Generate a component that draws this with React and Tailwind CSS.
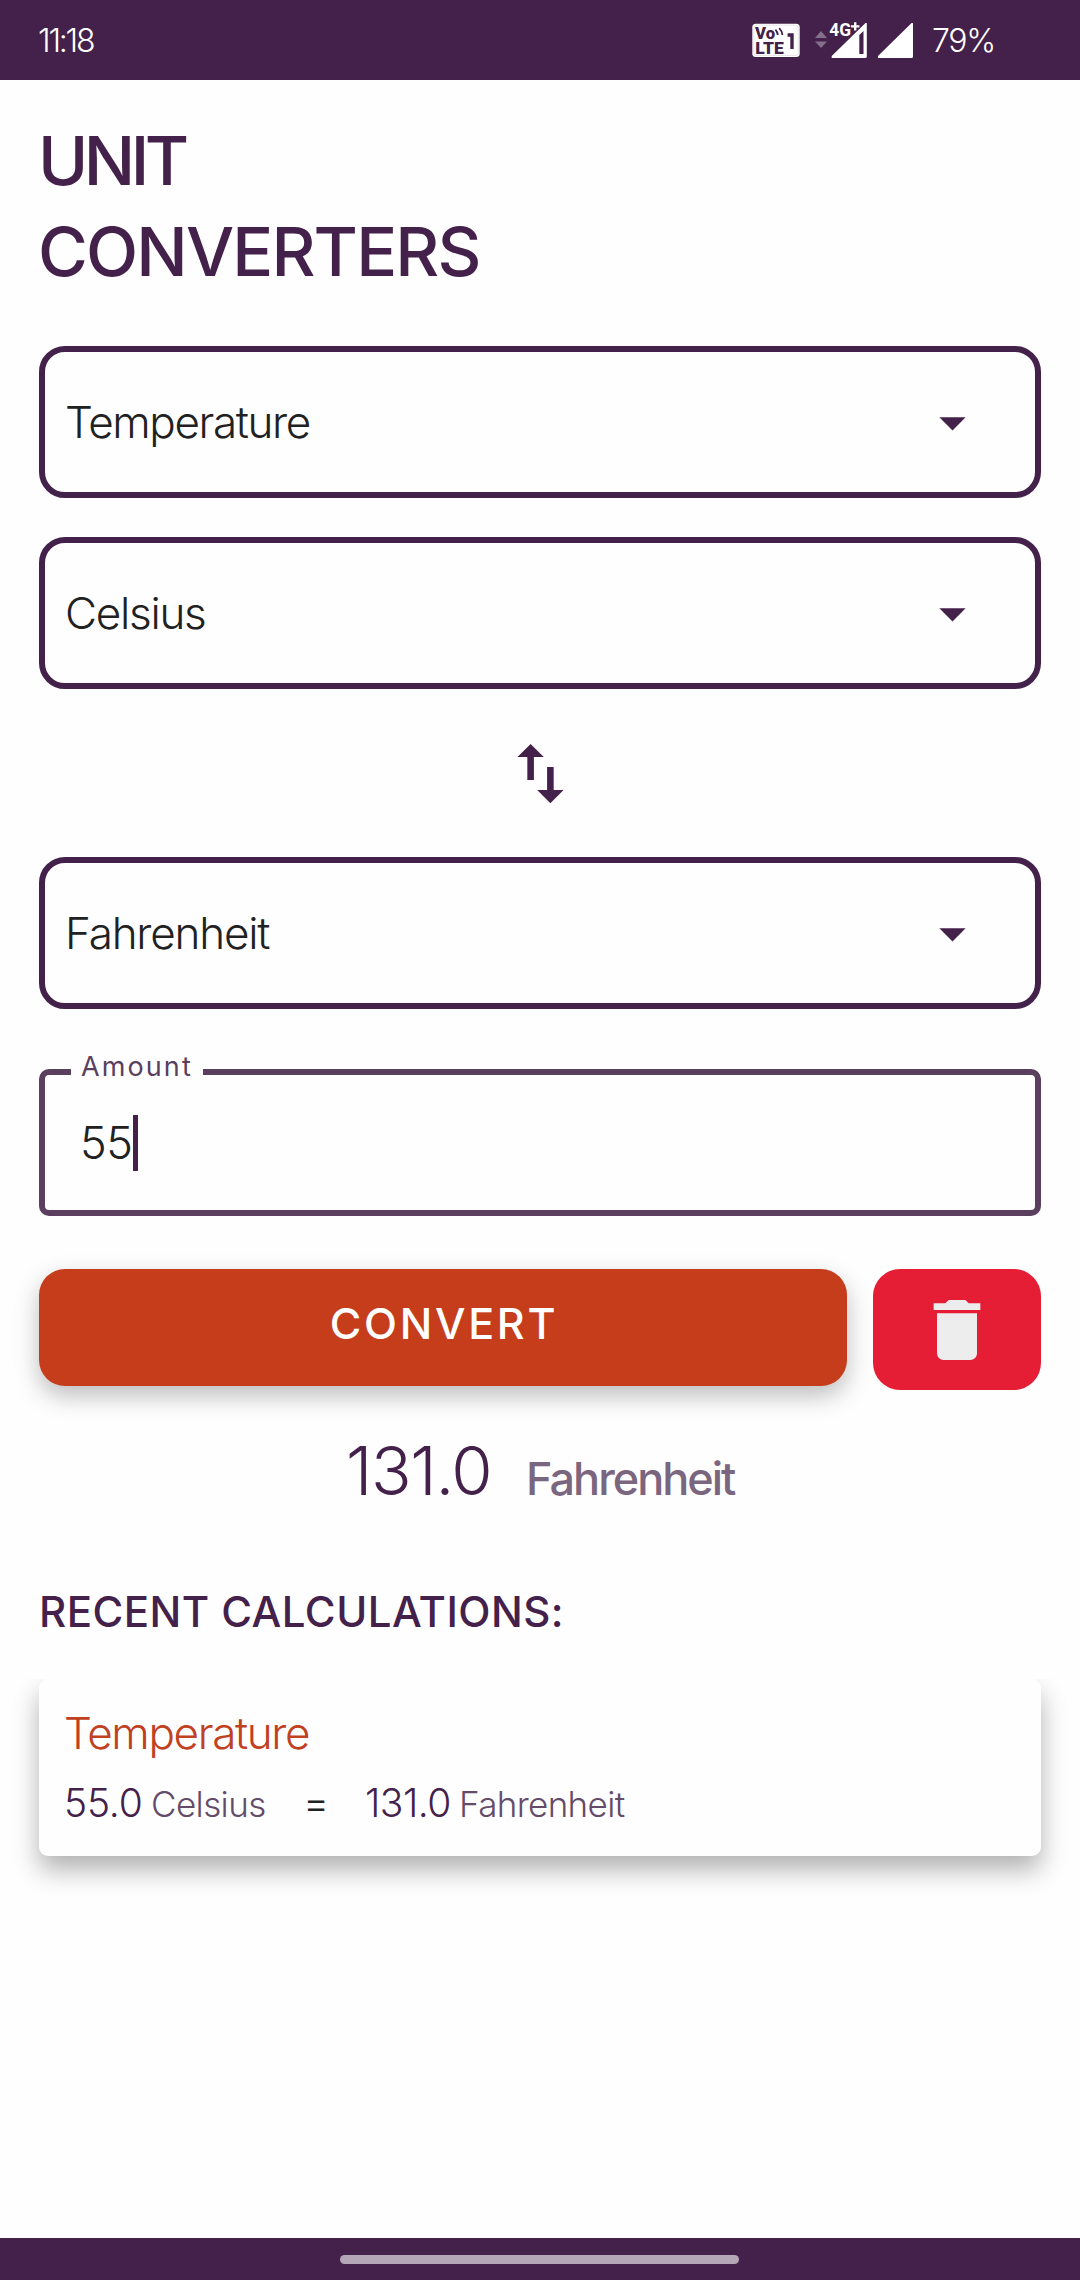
import React from "react";

function StatusIcons() {
  return (
    <svg width="164" height="40" viewBox="0 0 164 40" className="font-['Roboto',sans-serif]">
      <rect x="1.3" y="3.7" width="47.4" height="33.3" rx="3.5" fill="#ffffff" />
      <rect x="2.8" y="5.2" width="44.4" height="30.3" rx="2.5" fill="none" stroke="#44214a" strokeOpacity="0.2" strokeWidth="0.6" />
      <g fill="#44214a" fontWeight="900">
        <text x="4" y="18.8" fontSize="16.5" textLength="20" lengthAdjust="spacingAndGlyphs">Vo</text>
        <text x="4.3" y="33.5" fontSize="16.5" textLength="28.5" lengthAdjust="spacingAndGlyphs">LTE</text>
      </g>
      <path d="M36.6 15 H41 V29" fill="none" stroke="#44214a" strokeWidth="3.4" />
      <path d="M24.4 9.6 q2.2 2.2 2.4 5.4 M28.2 8.2 q3 3 3.2 6.8" fill="none" stroke="#44214a" strokeWidth="1.8" />
      <path d="M64 18 L70 11 L76 18 Z M64 21.5 L70 28 L76 21.5 Z" fill="#84708a" />
      <path d="M80.7 38 V36 L114.5 3 H115.8 V36.5 Q115.8 38 114.3 38 Z" fill="#ffffff" />
      <path d="M108.3 34 V15 L112.5 11 V34 Z" fill="#44214a" />
      <g fill="#ffffff" stroke="#44214a" strokeWidth="3" paintOrder="stroke" fontWeight="700">
        <text x="78.2" y="16.2" fontSize="17.5" textLength="21.8" lengthAdjust="spacingAndGlyphs">4G</text>
        <path d="M104.2 2.2 V10.6 M100 6.4 H108.4" strokeWidth="4.5" />
      </g>
      <path d="M104.2 2.2 V10.6 M100 6.4 H108.4" stroke="#ffffff" strokeWidth="2.4" />
      <path d="M127 38 V36 L160.6 3 H162 V36.5 Q162 38 160.5 38 Z" fill="#ffffff" />
    </svg>
  );
}

function Select({ value, spacing }) {
  return (
    <div className="flex h-[152px] items-center justify-between rounded-[26px] border-[6px] border-[#44214a] pr-[51px] pl-5">
      <span className={`text-[44px] font-light text-[#212121] ${spacing}`}>{value}</span>
      <svg width="63" height="63" viewBox="0 0 24 24" fill="#44214a">
        <path d="M7 10l5 5 5-5z" />
      </svg>
    </div>
  );
}

export default function App() {
  return (
    <div className="flex h-[2280px] w-[1080px] flex-col overflow-hidden bg-[#fefefe] font-['Inter',sans-serif] text-[#44214a]">
      <header className="flex h-20 shrink-0 items-center bg-[#44214a] pl-[38px] text-[32px] font-light text-white">
        <span className="w-[713px] pt-0.5 tracking-[-2.2px]">11:18</span>
        <StatusIcons />
        <span className="pt-0.5 pl-[17px] tracking-[-1.27px]">79%</span>
      </header>

      <main className="flex grow flex-col px-[39px]">
        <h1 className="-ml-px mt-[35px] text-[68px] leading-[91px] font-[450]">
          <span className="block tracking-[-4.5px]">UNIT</span>
          <span className="block tracking-[-1.85px]">CONVERTERS</span>
        </h1>

        <div className="mt-[49px] flex flex-col gap-[39px]">
          <Select value="Temperature" spacing="tracking-[-1.38px]" />
          <Select value="Celsius" spacing="tracking-[-1.28px]" />
        </div>

        <button className="my-[45px] flex h-[78px] items-center justify-center">
          <svg width="79" height="79" viewBox="0 0 24 24" fill="#44214a">
            <path d="M16 17.01V10h-2v7.01h-3L15 21l4-3.99h-3zM9 3L5 6.99h3V14h2V6.99h3L9 3z" />
          </svg>
        </button>

        <Select value="Fahrenheit" spacing="tracking-[-1.2px]" />

        <div className="relative mt-[60px] flex h-[147px] items-center rounded-[10px] border-[6px] border-[#5a3f5f] pl-[35px]">
          <label className="absolute -top-[23px] left-[26px] flex h-[30px] w-[132px] items-center bg-[#fefefe] pl-2.5 text-[27px] tracking-[2.1px] text-[#5a3f5f]">
            Amount
          </label>
          <span className="w-[53px] pt-px text-[45px] font-light tracking-[-0.4px] text-[#212121]">55</span>
          <span className="h-14 w-[5px] bg-[#44214a]" />
        </div>

        <div className="mt-[53px] flex items-start gap-[26px]">
          <button className="h-[117px] grow rounded-[26px] bg-[#c63d1b] pb-[9px] pl-0.5 text-[43px] font-medium tracking-[2.72px] text-white shadow-[0_10px_24px_rgba(0,0,0,0.26)]">
            CONVERT
          </button>
          <button className="flex h-[121px] w-[168px] items-center justify-center rounded-[27px] bg-[#e61e35]">
            <svg width="80" height="80" viewBox="0 0 24 24" fill="#ededed">
              <path d="M6 19c0 1.1.9 2 2 2h8c1.1 0 2-.9 2-2V7H6v12zM19 4h-3.500l-1-1h-5l-1 1H5v2h14V4z" />
            </svg>
          </button>
        </div>

        <div className="mt-[41px] flex h-20 items-baseline pl-[307px] leading-[80px]">
          <span className="w-[180px] text-[67px] font-light tracking-[-1.31px]">131.0</span>
          <span className="text-[45px] font-[450] tracking-[-2px] text-[#7b6680]">Fahrenheit</span>
        </div>

        <h2 className="mt-[71px] text-[42px] leading-[60px] font-medium tracking-[0.46px]">
          RECENT CALCULATIONS:
        </h2>

        <section className="-mx-[39px] mt-[37px] overflow-hidden px-[39px] pb-20">
          <article className="h-[177px] rounded-[9px] bg-[#fefefe] pt-[29px] pl-[25px] shadow-[0_14px_26px_rgba(0,0,0,0.3)]">
            <h3 className="text-[44px] leading-[50px] font-light tracking-[-1.35px] text-[#c0401f]">Temperature</h3>
            <p className="mt-5 grid grid-cols-[87px_152px_62px_94px_auto] items-baseline text-[35px] leading-[50px] font-light">
              <span className="text-[39px] tracking-[-0.2px]">55.0</span>
              <span className="tracking-[-0.6px] text-[#644b69]">Celsius</span>
              <span className="text-[40px] text-[#212121]">=</span>
              <span className="text-[39px] tracking-[-0.5px]">131.0</span>
              <span className="tracking-[-0.65px] text-[#644b69]">Fahrenheit</span>
            </p>
          </article>
        </section>
      </main>

      <footer className="flex h-[42px] shrink-0 justify-center bg-[#44214a] pt-[17px] pr-0.5">
        <div className="h-[9px] w-[399px] rounded-full bg-[#b4a6b7]" />
      </footer>
    </div>
  );
}
